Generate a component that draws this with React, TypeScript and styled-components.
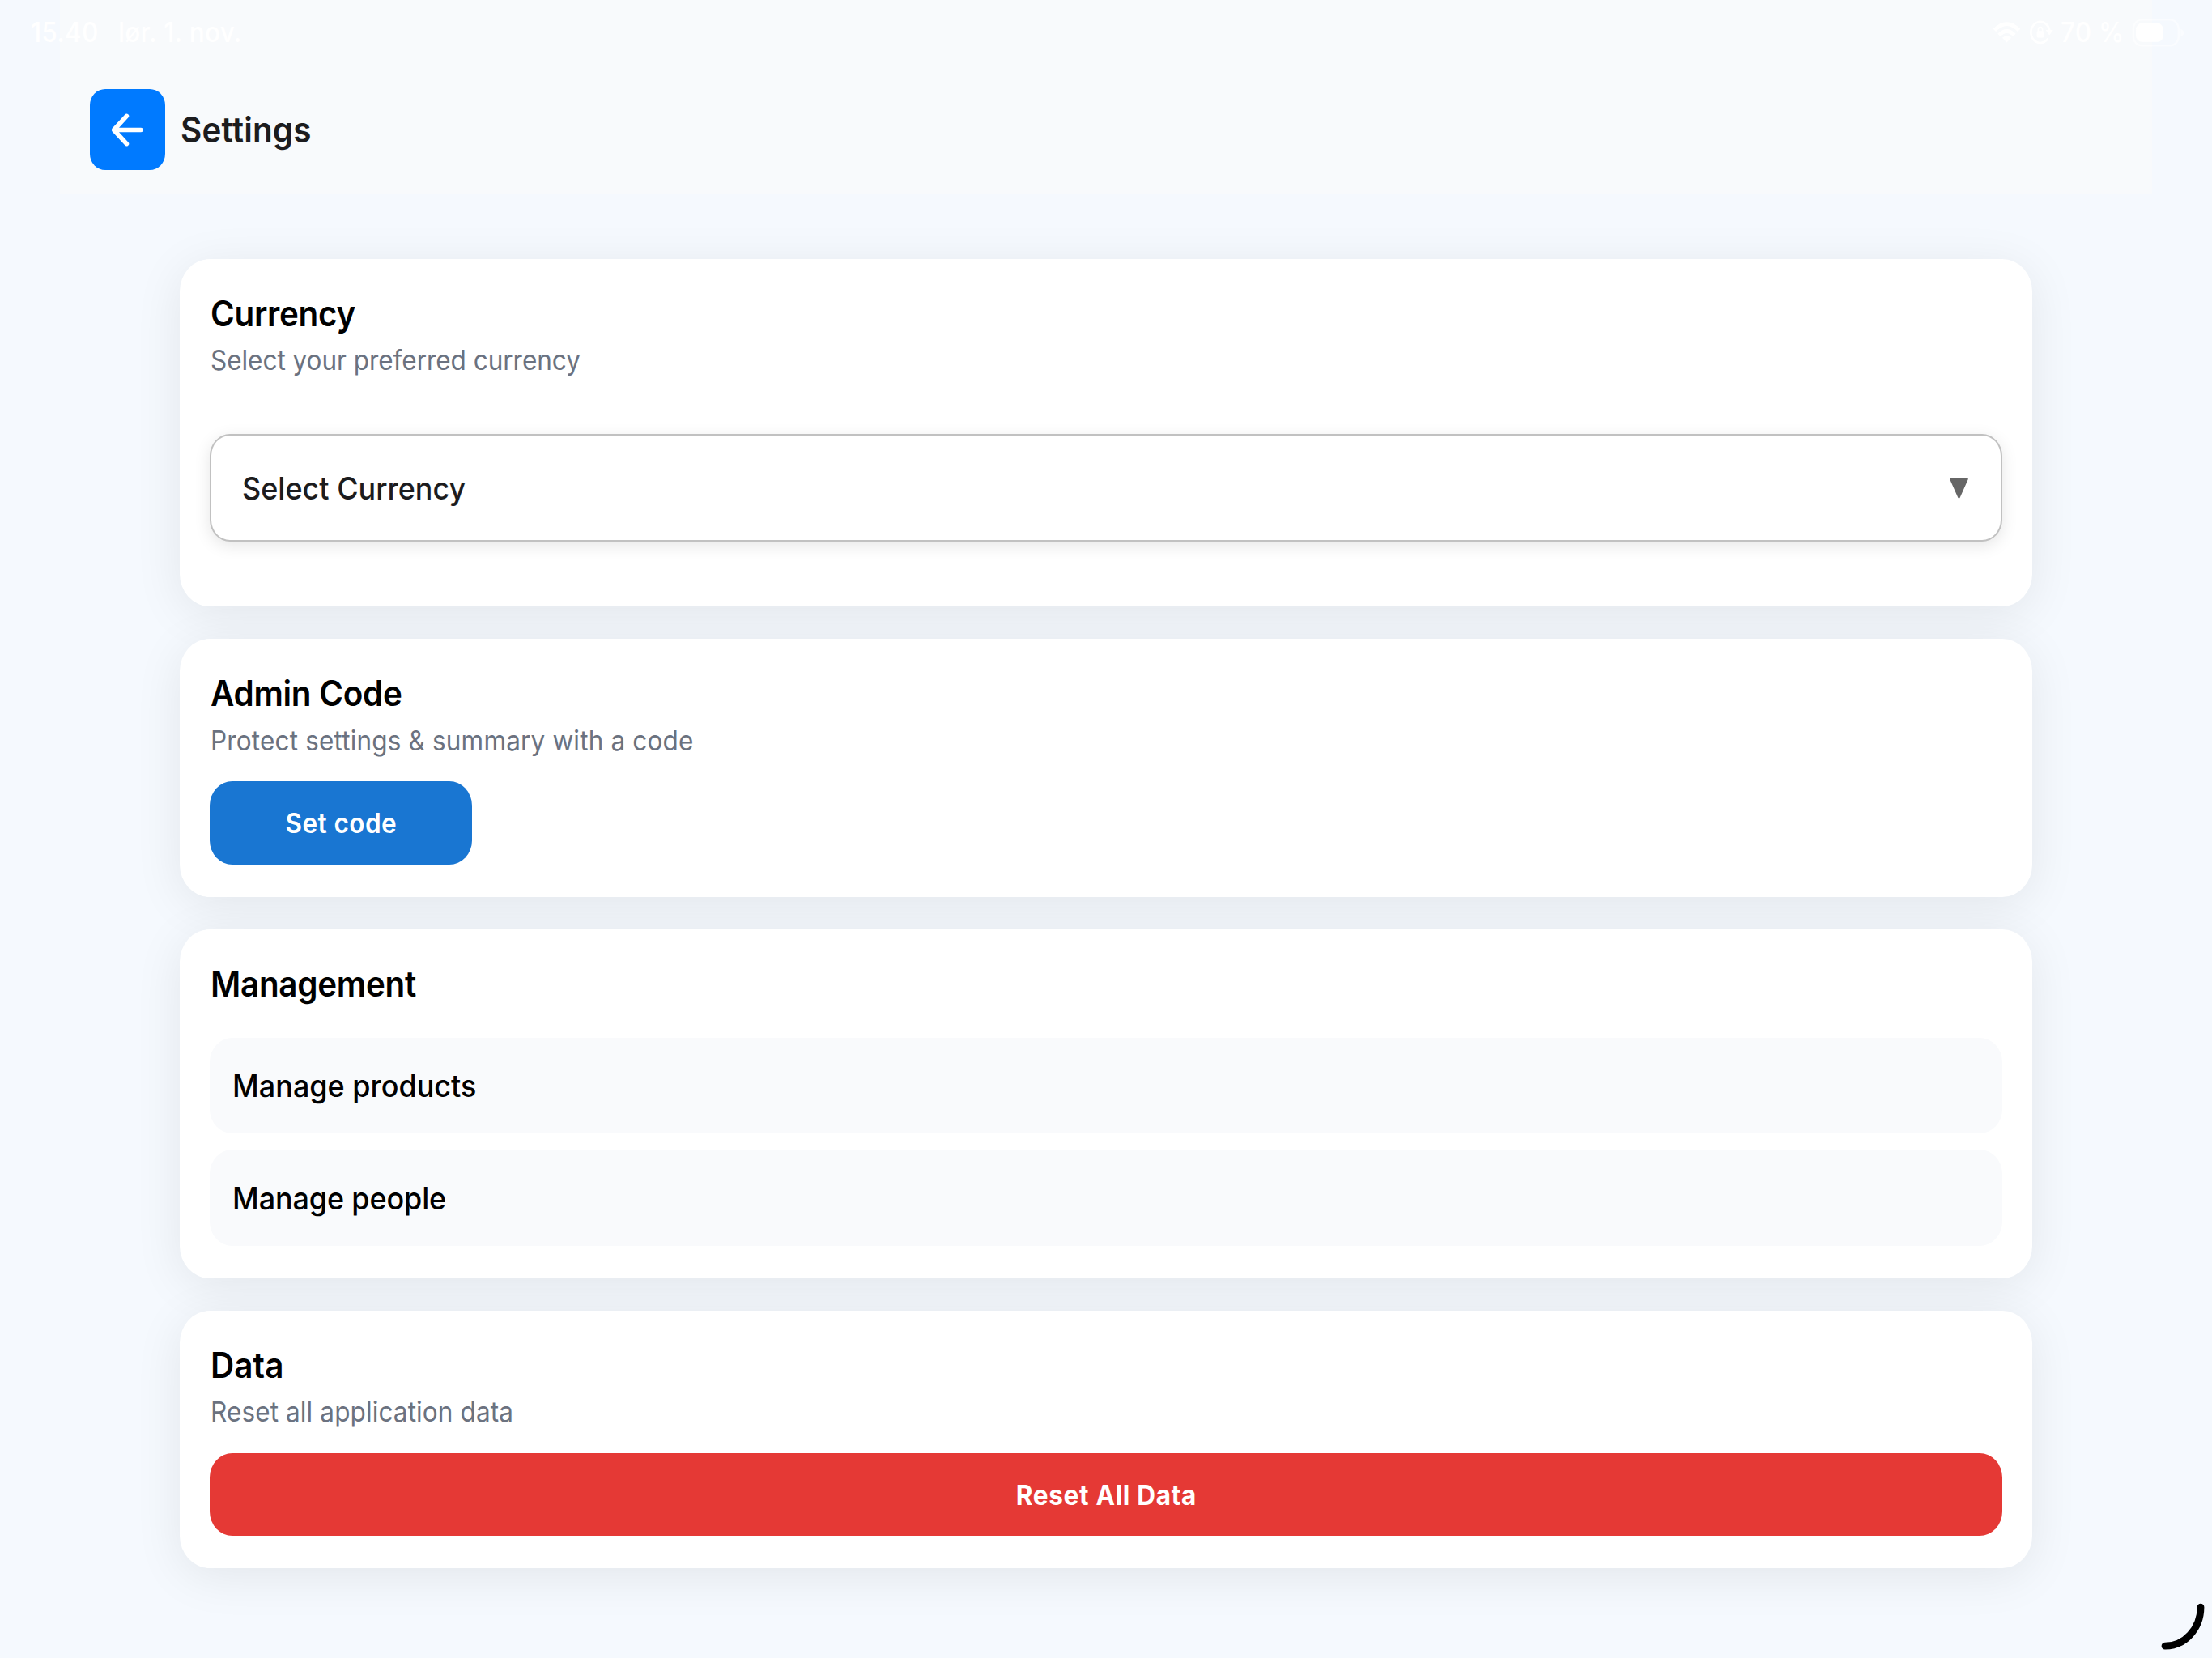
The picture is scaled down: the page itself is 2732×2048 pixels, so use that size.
import React from "react";
import styled, { createGlobalStyle, css } from "styled-components";

const GlobalStyle = createGlobalStyle`
  html, body, #root { margin: 0; height: 100%; }
  body { background: #f5f9fe; overflow: hidden; }
  *, *::before, *::after { box-sizing: border-box; }
`;

const Screen = styled.main`
  position: relative;
  width: 2732px;
  height: 2048px;
  overflow: hidden;
  background: #f5f9fe;
  font-family: Inter, "Liberation Sans", sans-serif;
  -webkit-font-smoothing: antialiased;
`;

/* The interface is drawn slightly condensed, so every label is squeezed horizontally. */
const Label = styled.span<{ $track?: number; $origin?: string }>`
  display: block;
  white-space: pre;
  letter-spacing: ${(p) => p.$track ?? 0}px;
  transform: scaleX(0.927);
  transform-origin: ${(p) => p.$origin ?? "left"} center;
`;

/* ---------- status bar ---------- */

const StatusBar = styled.div`
  position: absolute;
  inset: 0 0 auto 0;
  height: 80px;
  padding: 0 34px 0 37.6px;
  display: flex;
  justify-content: space-between;
  color: #ffffff;
  font-size: 34px;
  font-weight: 500;
  line-height: 80px;
`;

const StatusGroup = styled.div<{ $gap: number }>`
  display: flex;
  align-items: center;
  height: 80px;
  gap: ${(p) => p.$gap}px;
`;

const StatusText = styled.div<{ $width: number }>`
  width: ${(p) => p.$width}px;
`;

const StatusIcons = styled.svg`
  display: block;
  width: 76px;
  height: 80px;
`;

const BatteryIcon = styled.svg`
  display: block;
  width: 66px;
  height: 80px;
`;

/* ---------- header ---------- */

const Header = styled.header`
  height: 240px;
  margin: 0 74px;
  padding: 79.6px 37px 0;
  display: flex;
  align-items: center;
  gap: 19px;
  background: #f8fafc;
`;

const BackButton = styled.button`
  width: 92.8px;
  height: 100px;
  padding: 0;
  border: 0;
  border-radius: 19px / 20px;
  background: #007aff;
  display: grid;
  place-items: center;
`;

const HeaderTitle = styled.h1`
  margin: 0;
  padding-top: 2px;
  color: #1c1c1e;
  font-size: 43.6px;
  font-weight: 600;
  line-height: 55px;
`;

/* ---------- cards ---------- */

const Content = styled.div`
  padding: 79.6px 222.4px 0 222.2px;
  display: flex;
  flex-direction: column;
  gap: 40px;
`;

const Card = styled.section<{ $bottom?: number }>`
  padding: 40px 37px ${(p) => p.$bottom ?? 40}px;
  border-radius: 37px / 40px;
  background: #ffffff;
  box-shadow: 0 10px 60px rgba(0, 0, 0, 0.08);
`;

const CardTitle = styled.h2`
  margin: 0;
  padding-left: 0.6px;
  color: #000000;
  font-size: 43.6px;
  font-weight: 600;
  line-height: 55px;
`;

const CardHint = styled.p`
  margin: 9.6px 0 -1px;
  padding-left: 0.5px;
  color: #6b7280;
  font-size: 34px;
  line-height: 42.4px;
`;

const SelectBox = styled.button`
  width: 100%;
  height: 133.4px;
  margin: 70.2px 0 0;
  padding: 1px 38.6px 0 37.8px;
  display: flex;
  align-items: center;
  justify-content: space-between;
  border: 2px solid #c1c1c1;
  border-radius: 25px / 27px;
  background: #ffffff;
  box-shadow: 0 5px 20px rgba(0, 0, 0, 0.1);
  color: #1c1c1e;
  font-family: inherit;
  font-size: 38.8px;
  font-weight: 500;
  line-height: 48px;
`;

const pill = css`
  display: flex;
  align-items: center;
  justify-content: center;
  height: 102.6px;
  margin: 30px 0 0;
  padding: 1px 0 0;
  border: 0;
  border-radius: 28px / 30px;
  color: #ffffff;
  font-family: inherit;
  font-size: 34px;
  line-height: 42px;
`;

const PrimaryButton = styled.button`
  ${pill}
  width: 323.8px;
  background: #1976d2;
  font-weight: 600;
`;

const DangerButton = styled.button`
  ${pill}
  width: 100%;
  padding-left: 1px;
  background: #e53935;
  font-weight: 700;
`;

const LinkList = styled.nav`
  margin-top: 38.8px;
  display: flex;
  flex-direction: column;
  gap: 20.4px;
`;

const LinkRow = styled.a`
  height: 118.4px;
  padding: 1px 28px 0 27.6px;
  display: flex;
  align-items: center;
  border-radius: 28px / 30px;
  background: #f9fafc;
  color: #000000;
  font-size: 38.8px;
  font-weight: 500;
  line-height: 48px;
`;

const CornerMark = styled.svg`
  position: absolute;
  right: 0;
  bottom: 0;
  width: 132px;
  height: 128px;
`;

function BackArrow() {
  return (
    <svg width="93" height="101" viewBox="0 0 93 101" fill="none" stroke="#fff" strokeWidth="5.6" strokeLinecap="round" strokeLinejoin="round">
      <path d="M63 50.5H30M45.4 33.4 29.6 50.5l15.8 17.1" />
    </svg>
  );
}

function Caret() {
  return (
    <svg width="25" height="28" viewBox="0 0 25 28">
      <path d="M2.6 2.6h19.8L12.5 25z" fill="#666" stroke="#666" strokeWidth="2.8" strokeLinejoin="round" />
    </svg>
  );
}

/* Wi-Fi and orientation lock, side by side */
function Connectivity() {
  return (
    <StatusIcons viewBox="2460 0 76 80" fill="none">
      <g stroke="#fff" strokeWidth="4.8">
        <path d="M2463.4 37.4Q2478.5 22 2493.6 37.4" />
        <path d="M2469 43.4Q2478.5 33.6 2488 43.4" />
      </g>
      <path d="M2473 46.8Q2478.5 42.4 2484 46.8L2478.5 52.4z" fill="#fff" />
      <path d="M2531.5 38.4A11.6 13 0 1 0 2528.8 48.4" stroke="#fff" strokeWidth="2.6" strokeLinecap="round" />
      <path d="M2526.6 37h9.2l-4.6 6.6z" fill="#fff" />
      <rect x="2515.6" y="38.2" width="8.8" height="8.4" rx="1.6" fill="#fff" />
      <path d="M2517.4 39v-2.4a2.6 3 0 0 1 5.2 0V39" stroke="#fff" strokeWidth="1.6" />
    </StatusIcons>
  );
}

function Battery() {
  return (
    <BatteryIcon viewBox="2632 0 66 80" fill="none">
      <rect x="2634.8" y="24.4" width="56" height="32" rx="10.5" ry="11.5" stroke="#fff" strokeOpacity="0.5" strokeWidth="2.4" />
      <rect x="2638" y="28.6" width="34" height="23.2" rx="7.4" ry="8" fill="#fff" />
      <path d="M2693.4 35.8c5.2 2 5.2 7.6 0 9.6z" fill="#fff" fillOpacity="0.5" />
    </BatteryIcon>
  );
}

export default function App() {
  return (
    <>
      <GlobalStyle />
      <Screen>
        <Header>
          <BackButton aria-label="Back">
            <BackArrow />
          </BackButton>
          <HeaderTitle>
            <Label $track={0.2}>Settings</Label>
          </HeaderTitle>
        </Header>

        <Content>
          <Card $bottom={80}>
            <CardTitle><Label $track={-0.3}>Currency</Label></CardTitle>
            <CardHint><Label $track={-0.04}>Select your preferred currency</Label></CardHint>
            <SelectBox>
              <Label>Select Currency</Label>
              <Caret />
            </SelectBox>
          </Card>

          <Card>
            <CardTitle><Label $track={-0.3}>Admin Code</Label></CardTitle>
            <CardHint><Label $track={0.17}>Protect settings &amp; summary with a code</Label></CardHint>
            <PrimaryButton>
              <Label $track={0.492} $origin="center">Set code</Label>
            </PrimaryButton>
          </Card>

          <Card>
            <CardTitle><Label $track={-0.32}>Management</Label></CardTitle>
            <LinkList>
              <LinkRow><Label>Manage products</Label></LinkRow>
              <LinkRow><Label $track={-0.143}>Manage people</Label></LinkRow>
            </LinkList>
          </Card>

          <Card>
            <CardTitle><Label $track={0.1}>Data</Label></CardTitle>
            <CardHint><Label $track={0.12}>Reset all application data</Label></CardHint>
            <DangerButton>
              <Label $track={0.74} $origin="center">Reset All Data</Label>
            </DangerButton>
          </Card>
        </Content>

        <StatusBar>
          <StatusGroup $gap={0}>
            <StatusText $width={108.6}><Label $track={0.285}>15.40</Label></StatusText>
            <StatusText $width={160}><Label $track={0.3}>lør. 1. nov.</Label></StatusText>
          </StatusGroup>
          <StatusGroup $gap={9}>
            <Connectivity />
            <StatusText $width={78}><Label $track={0.226}>70 %</Label></StatusText>
            <Battery />
          </StatusGroup>
        </StatusBar>

        <CornerMark viewBox="2600 1920 132 128" fill="none">
          <path d="M2718 1985.2A44 48.2 0 0 1 2674 2033.2" stroke="#000" strokeWidth="8.8" strokeLinecap="round" />
        </CornerMark>
      </Screen>
    </>
  );
}
